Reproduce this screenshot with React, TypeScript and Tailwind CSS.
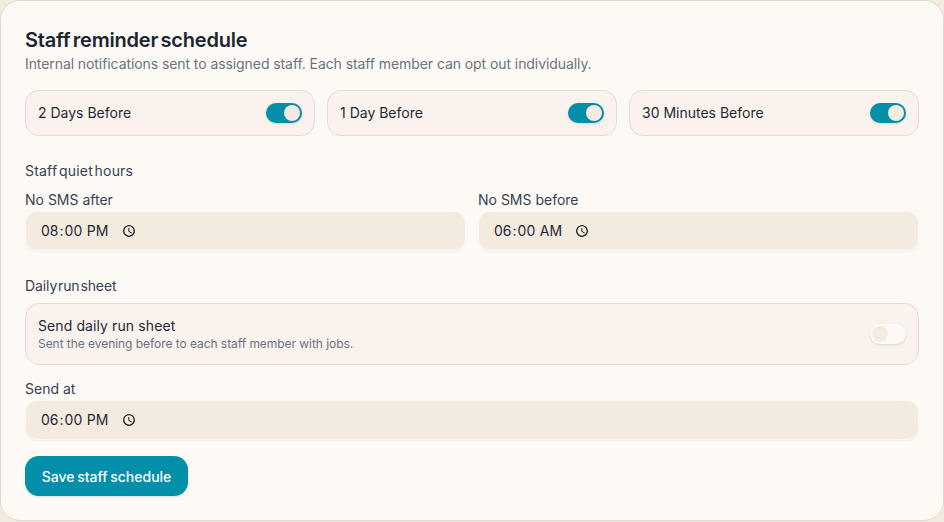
export default function App() {
  const toggle = (label: string) => (
    <div key={label} className="flex items-center justify-between h-[46px] px-3 rounded-[14px] border border-[#e6dcd2] bg-[#faf3ed]">
      <span className="text-sm text-[#1f2933]">{label}</span>
      <Switch on />
    </div>
  );
  return (
    <div className="w-[944px] h-[522px] bg-[#f2ebe0] font-['Inter',sans-serif] overflow-hidden">
      <div className="h-[521px] rounded-[20px] border border-[#e2d9cd] bg-[#fdfaf6] px-6 pt-[26px]">
        <h2 className="text-[20px] leading-[27px] font-semibold text-[#1a2530] tracking-[-0.2px] [word-spacing:-2.5px]">Staff reminder schedule</h2>
        <p className="text-sm leading-5 text-[#6b7280] tracking-[-0.08px]">Internal notifications sent to assigned staff. Each staff member can opt out individually.</p>
        <div className="grid grid-cols-3 gap-3 mt-4">
          {["2 Days Before", "1 Day Before", "30 Minutes Before"].map(toggle)}
        </div>
        <div className="mt-[25px] text-sm leading-5 text-[#374151] tracking-[0.2px] [word-spacing:-2.5px]">Staff quiet hours</div>
        <div className="grid grid-cols-2 gap-3 mt-[9px]">
          <Field label="No SMS after" value="20:00" />
          <Field label="No SMS before" value="06:00" />
        </div>
        <div className="mt-[25px] text-sm leading-5 text-[#374151] tracking-[-0.1px] [word-spacing:-3px]">Daily run sheet</div>
        <div className="flex items-center justify-between h-[62px] mt-[7px] px-3 rounded-[14px] border border-[#e6dcd2] bg-[#faf3ed]">
          <div>
            <div className="text-sm leading-5 text-[#1f2933] tracking-[0.1px]">Send daily run sheet</div>
            <div className="text-xs leading-4 text-[#6b7280] tracking-[-0.05px]">Sent the evening before to each staff member with jobs.</div>
          </div>
          <Switch on={false} />
        </div>
        <div className="mt-[14px]">
          <Field label="Send at" value="18:00" />
        </div>
        <button className="mt-4 h-10 w-[163px] pt-px rounded-[14px] bg-[#038eaa] text-white text-sm font-medium shadow-sm [word-spacing:-1px]">Save staff schedule</button>
      </div>
    </div>
  );
}

function Switch({ on }: { on: boolean }) {
  return on ? (
    <span className="flex items-center justify-end w-9 h-5 p-0.5 rounded-full bg-[#038eaa] shadow-sm">
      <span className="size-4 rounded-full bg-[#f3ebe0]" />
    </span>
  ) : (
    <span className="flex items-center justify-start w-9 h-5 p-0.5 rounded-full bg-[#fdfaf6] shadow-sm">
      <span className="size-4 rounded-full bg-[#f3ebe0]" />
    </span>
  );
}

function Field({ label, value }: { label: string; value: string }) {
  return (
    <label className="block">
      <span className="block text-sm leading-5 text-[#374151]">{label}</span>
      <input
        type="time"
        defaultValue={value}
        className="block w-full h-10 mt-px pl-[14px] pr-4 rounded-xl bg-[#f3ebe0] text-sm text-[#1f2933] shadow-[0_1px_2px_rgba(0,0,0,0.05)] border border-[#fdfaf6] [&::-webkit-datetime-edit]:flex-none [&::-webkit-calendar-picker-indicator]:ml-2"
      />
    </label>
  );
}
